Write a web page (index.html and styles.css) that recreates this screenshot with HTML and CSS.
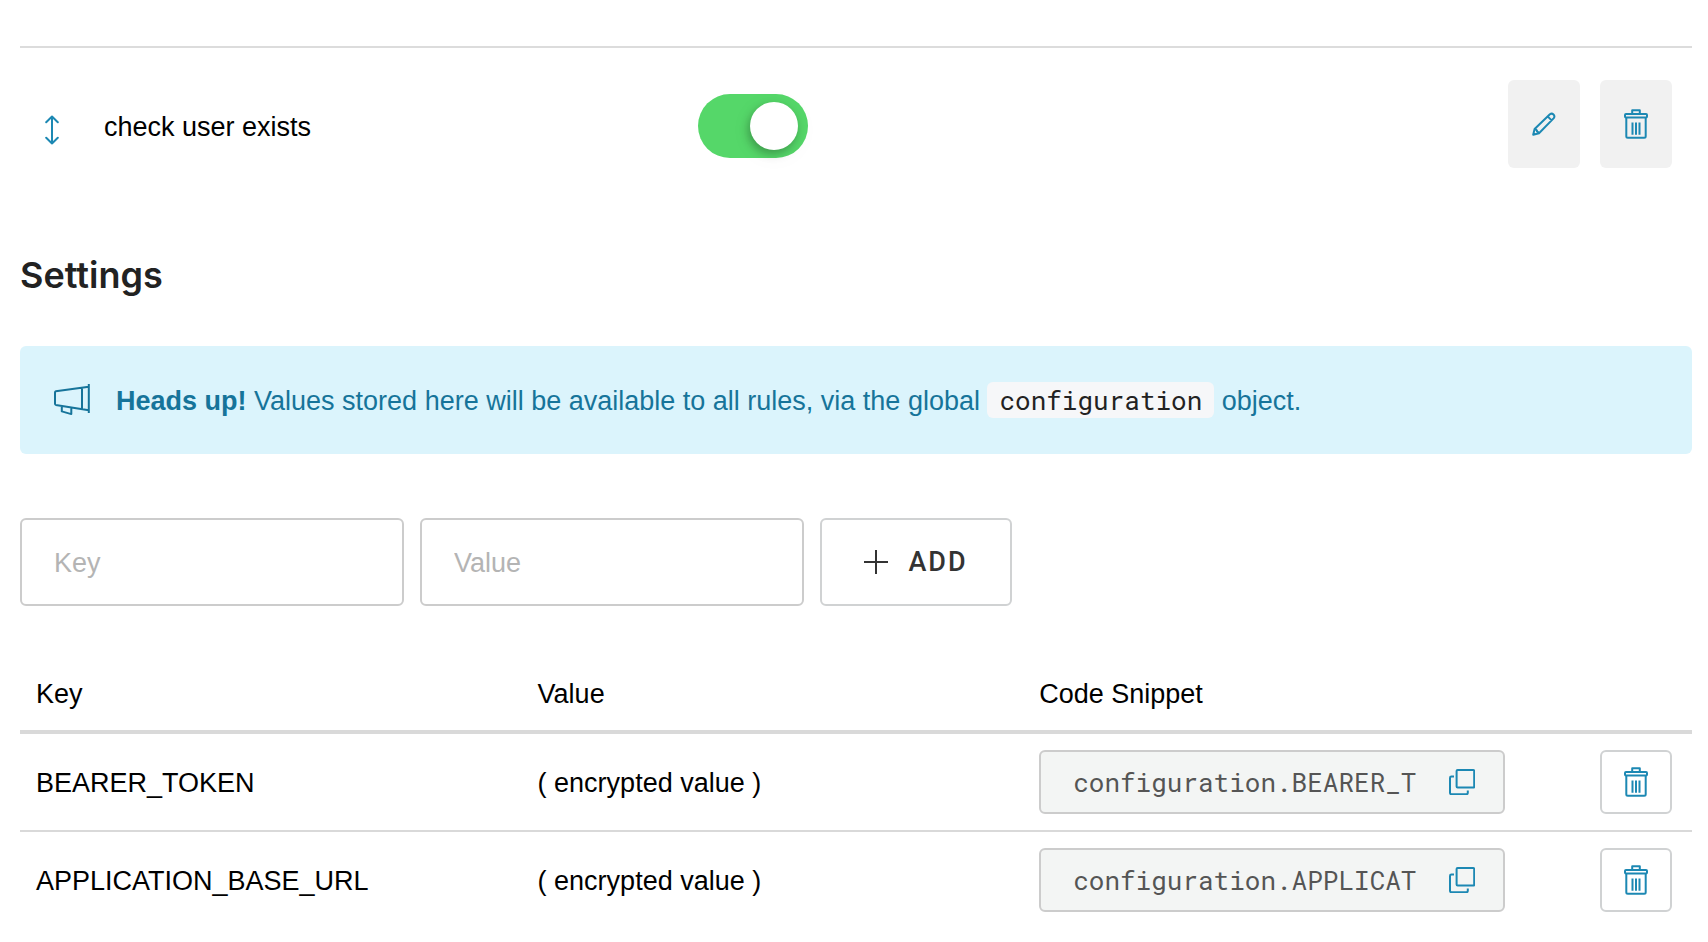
FILE: index.html
```
<!DOCTYPE html>
<html lang="en">
<head>
<meta charset="utf-8">
<meta name="viewport" content="width=device-width, initial-scale=1">
<title>Rules</title>
<link rel="stylesheet" href="styles.css">
</head>
<body>
<svg class="sprite" aria-hidden="true">
  <symbol id="trash" viewBox="0 0 24 30">
    <path d="M8.2 4.6V1.2h7.6v3.4M2.3 9v18.3q0 1.5 1.5 1.5h16.4q1.5 0 1.5-1.5V9M8.5 13.5v12.3M12 13.5v12.3M15.5 13.5v12.3"/>
    <rect x="1" y="5" width="22" height="3.6" rx="1"/>
  </symbol>
  <symbol id="copy" viewBox="0 0 26 26">
    <rect x="7.6" y="1" width="17.6" height="17.6" rx="1"/>
    <path d="M5 7.6H2.4Q1 7.6 1 9v14.8q0 1.4 1.4 1.4h15q1.4 0 1.4-1.4V21.4"/>
  </symbol>
</svg>
<main class="page">
  <section class="rule">
    <svg class="icon drag" viewBox="0 0 14 30" role="img" aria-label="Reorder"><path d="M7 1.5v27M1.2 7.2 7 1.5l5.8 5.7M1.2 22.8 7 28.5l5.8-5.7"/></svg>
    <label for="enabled">check user exists</label>
    <input class="toggle" type="checkbox" id="enabled" checked>
    <div class="actions">
      <button class="btn soft" type="button" aria-label="Edit"><svg class="icon pencil" viewBox="0 0 24 24"><path d="M1.2 22.8 2.6 17 17.9 2.2a2.8 2.8 0 0 1 3.9 3.9L7 21.2ZM2.6 17q1.4.2 2 1.2.6.6.4 1.2 1.2.2 2 1.8M15.6 4.4l4 4"/></svg></button>
      <button class="btn soft" type="button" aria-label="Delete rule"><svg class="icon trash"><use href="#trash"/></svg></button>
    </div>
  </section>

  <h2>Settings</h2>

  <div class="notice">
    <svg class="icon horn" viewBox="0 0 36 32" aria-hidden="true"><path d="M34.8 0v29M28 4v21.5M34.8 2.8 1.8 7.3Q1 7.4 1 8.4v11.4q0 .9.8 1.1l33 5.3M7.8 22v5.4l9.5 2.7v-6.6"/></svg>
    <p><strong>Heads up!</strong> Values stored here will be available to all rules, via the global <code>configuration</code> object.</p>
  </div>

  <form class="add-form">
    <input class="field" type="text" placeholder="Key" aria-label="Key">
    <input class="field" type="text" placeholder="Value" aria-label="Value">
    <button class="add" type="button"><svg class="icon plus" viewBox="0 0 24 24" aria-hidden="true"><path d="M12 0v24M0 12h24"/></svg>ADD</button>
  </form>

  <table class="settings">
    <thead>
      <tr><th scope="col">Key</th><th scope="col">Value</th><th scope="col">Code Snippet</th><td></td></tr>
    </thead>
    <tbody>
      <tr>
        <td>BEARER_TOKEN</td><td>( encrypted value )</td>
        <td><div class="snippet"><input type="text" readonly value="configuration.BEARER_T" aria-label="Snippet for BEARER_TOKEN"><button type="button" aria-label="Copy"><svg class="icon copy"><use href="#copy"/></svg></button></div></td>
        <td><button class="btn outline" type="button" aria-label="Delete BEARER_TOKEN"><svg class="icon trash"><use href="#trash"/></svg></button></td>
      </tr>
      <tr>
        <td>APPLICATION_BASE_URL</td><td>( encrypted value )</td>
        <td><div class="snippet"><input type="text" readonly value="configuration.APPLICAT" aria-label="Snippet for APPLICATION_BASE_URL"><button type="button" aria-label="Copy"><svg class="icon copy"><use href="#copy"/></svg></button></div></td>
        <td><button class="btn outline" type="button" aria-label="Delete APPLICATION_BASE_URL"><svg class="icon trash"><use href="#trash"/></svg></button></td>
      </tr>
    </tbody>
  </table>
</main>
</body>
</html>
```
FILE: styles.css
```
* { box-sizing: border-box; }
body {
  margin: 0;
  background: #fff;
  color: #000;
  font: 27px/40px "Liberation Sans", Arial, sans-serif;
}
button, input { font: inherit; color: inherit; margin: 0; }
button { padding: 0; border: 0; background: none; cursor: pointer; }
.sprite { display: none; }
.page { padding: 46px 16px 30px 20px; }

.icon { display: block; flex: none; fill: none; stroke: #1c88b3; stroke-width: 2; stroke-linejoin: round; }
.drag { width: 14px; height: 30px; margin: 12px 0 0 25px; stroke-linecap: round; }
.pencil { width: 24px; height: 24px; }
.trash { width: 24px; height: 30px; }
.copy { width: 26px; height: 26px; }
.horn { width: 36px; height: 32px; stroke: #16749a; }
.plus { width: 24px; height: 24px; stroke: #333; }

.rule {
  display: grid;
  grid-template-columns: 84px 11fr 15fr 164px;
  align-items: center;
  padding: 32px 20px 32px 0;
  border-top: 2px solid #dcdcdc;
}
.rule label { padding-top: 6px; }
.actions { display: flex; gap: 20px; justify-content: flex-end; }
.toggle {
  appearance: none;
  display: flex;
  justify-content: flex-end;
  width: 110px;
  height: 64px;
  margin-top: 4px;
  padding: 8px 10px;
  border-radius: 32px;
  background: #55d769;
  cursor: pointer;
}
.toggle::before {
  content: "";
  width: 48px;
  height: 48px;
  border-radius: 50%;
  background: #fff;
  box-shadow: -2px 4px 8px rgba(0, 0, 0, .25), 0 4px 24px rgba(0, 0, 0, .05);
}
.toggle:not(:checked) { justify-content: flex-start; background: #ccc; }
.btn { display: flex; align-items: center; justify-content: center; width: 72px; border-radius: 6px; }
.soft { height: 88px; background: #f1f1f1; }
.outline { height: 64px; border: 2px solid #d0d2d3; }

h2 { margin: 52px 0 48px; font: 600 36px/46px Inter, "Liberation Sans", sans-serif; color: #222; }

.notice {
  display: flex;
  align-items: center;
  gap: 26px;
  min-height: 108px;
  padding: 32px 34px;
  border-radius: 6px;
  background: #dbf4fc;
  color: #16749a;
}
.notice p { margin: 0; }
.notice strong { font-weight: 700; }
.notice code { padding: 1px 12px; border-radius: 6px; background: #f6f7f9; color: #222; font-size: 26px; }
code, .snippet input { font-family: "Roboto Mono", "Liberation Mono", monospace; }

.add-form { display: flex; gap: 16px; margin: 64px 0 60px; }
.field { flex: 0 1 384px; min-width: 0; height: 88px; padding: 2px 32px 0; border: 2px solid #ccc; border-radius: 6px; background: #fff; }
.field::placeholder { color: #b4b4b4; opacity: 1; }
.add {
  display: flex;
  align-items: center;
  justify-content: center;
  gap: 20px;
  width: 192px;
  border: 2px solid #d0d2d3;
  border-radius: 6px;
  color: #333;
  font-family: Roboto, "Liberation Sans", sans-serif;
  font-weight: 500;
  letter-spacing: 2px;
}

.settings { width: 100%; border-collapse: separate; border-spacing: 0; table-layout: fixed; }
.settings th { width: 30%; padding: 8px 16px 16px; text-align: left; font-weight: 400; }
.settings td { padding: 16px; }
.settings tbody td:nth-child(-n+2) { padding: 18px 16px 16px; }
.settings thead td { padding: 0; }
.settings thead th, .settings thead td { border-bottom: 4px solid #d9d9d9; }
.settings tbody tr + tr td { border-top: 2px solid #d9d9d9; }
.settings td:nth-child(n+3) { padding-right: 20px; }
.outline { margin-left: auto; }
.snippet {
  display: flex;
  align-items: center;
  justify-content: space-between;
  height: 64px;
  padding: 0 28px 0 32px;
  border: 2px solid #ccc;
  border-radius: 6px;
  background: #f3f5f4;
}
.snippet input { flex: 0 1 344px; min-width: 0; padding: 0; border: 0; background: none; color: #555; font-size: 26px; }
```
